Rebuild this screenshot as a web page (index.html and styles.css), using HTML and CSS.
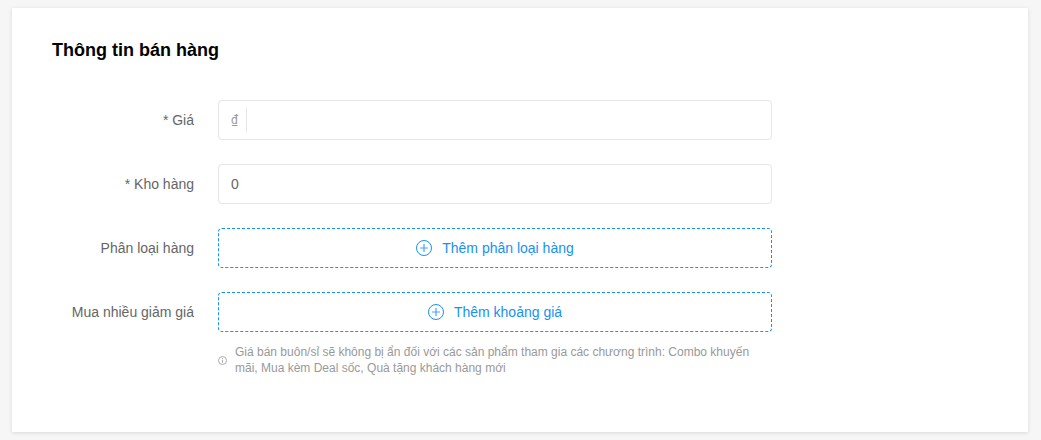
FILE: index.html
```html
<!DOCTYPE html>
<html lang="vi">
<head>
<meta charset="utf-8">
<meta name="viewport" content="width=device-width, initial-scale=1">
<title>Thông tin bán hàng</title>
<link rel="stylesheet" href="styles.css">
</head>
<body>
<main class="card">
  <h1 class="card-title">Thông tin bán hàng</h1>
  <form class="form">
    <label class="label" for="price">* Giá</label>
    <div class="input-box">
      <span class="prefix">₫</span>
      <input class="input" id="price" type="text">
    </div>

    <label class="label" for="stock">* Kho hàng</label>
    <div class="input-box">
      <input class="input" id="stock" type="text" value="0">
    </div>

    <label class="label" for="variation">Phân loại hàng</label>
    <button class="add-button" id="variation" type="button">
      <svg class="plus-icon" viewBox="0 0 16 16" aria-hidden="true"><circle cx="8" cy="8" r="7.5"/><path class="plus-cross" d="M8 4v8M4 8h8"/></svg>
      <span>Thêm phân loại hàng</span>
    </button>

    <label class="label" for="wholesale">Mua nhiều giảm giá</label>
    <div class="field">
      <button class="add-button" id="wholesale" type="button">
        <svg class="plus-icon" viewBox="0 0 16 16" aria-hidden="true"><circle cx="8" cy="8" r="7.5"/><path class="plus-cross" d="M8 4v8M4 8h8"/></svg>
        <span>Thêm khoảng giá</span>
      </button>
      <div class="hint">
        <svg class="info-icon" viewBox="0 0 9 9" aria-hidden="true"><circle cx="4.5" cy="4.5" r="4"/><path d="M4.5 2v1M4.5 3.7v3.1"/></svg>
        <p class="hint-text">Giá bán buôn/sỉ sẽ không bị ẩn đối với các sản phẩm tham gia các chương trình: Combo khuyến mãi, Mua kèm Deal sốc, Quà tặng khách hàng mới</p>
      </div>
    </div>
  </form>
</main>
</body>
</html>
```
FILE: styles.css
```css
* {
  box-sizing: border-box;
}

body {
  margin: 0;
  padding: 8px 13px 8px 12px;
  background: #f6f6f6;
  color: #666;
  font: 14px/20px "Liberation Sans", Arial, sans-serif;
}

.card {
  padding: 30px 40px 56px;
  background: #fff;
  box-shadow: 0 1px 4px rgba(0, 0, 0, 0.12);
}

.card-title {
  margin: 0 0 38px;
  color: #000;
  font-size: 18px;
  line-height: 24px;
}

.form {
  display: grid;
  grid-template-columns: 142px minmax(0, 554px);
  gap: 24px;
}

.label {
  line-height: 40px;
  text-align: right;
}

.input-box {
  display: flex;
  align-items: center;
  height: 40px;
  padding: 0 12px;
  border: 1px solid #e5e5e5;
  border-radius: 4px;
}

.prefix {
  width: 16px;
  height: 24px;
  margin-right: 12px;
  border-right: 1px solid #e5e5e5;
  color: #999;
  font-family: Roboto, sans-serif;
  font-size: 12px;
  line-height: 24px;
}

.input {
  flex: 1;
  min-width: 0;
  padding: 0;
  border: 0;
  outline: 0;
  background: none;
  color: #666;
  font: inherit;
}

.add-button {
  display: flex;
  align-items: center;
  justify-content: center;
  gap: 10px;
  width: 100%;
  height: 40px;
  padding: 0;
  border: 1px dashed #1791f2;
  border-radius: 4px;
  background: #fff;
  color: #1791f2;
  font: inherit;
  cursor: pointer;
}

.plus-icon {
  width: 16px;
  height: 16px;
  fill: none;
  stroke: currentColor;
  stroke-width: 1;
}

.plus-cross {
  stroke-width: 1.2;
  stroke-opacity: 0.8;
}

.hint {
  display: flex;
  align-items: center;
  gap: 8px;
  margin-top: 12px;
  padding-right: 12px;
  color: #999;
  font-size: 12px;
  line-height: 16px;
}

.info-icon {
  flex: none;
  width: 9px;
  height: 9px;
  fill: none;
  stroke: currentColor;
  stroke-width: 0.8;
}

.hint-text {
  margin: 0;
}
```
